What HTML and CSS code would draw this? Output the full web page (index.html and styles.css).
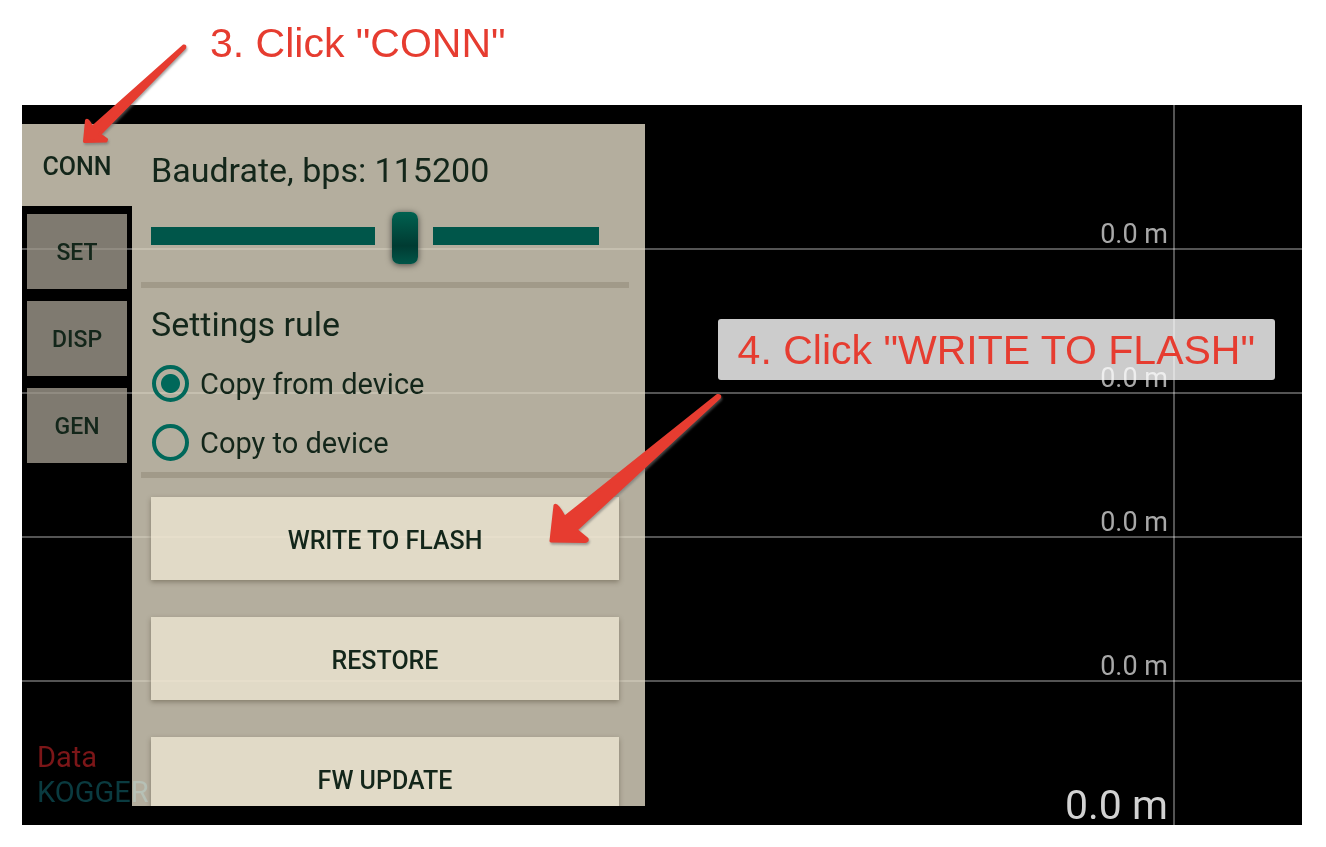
FILE: index.html
```html
<!DOCTYPE html>
<html lang="en">
<head>
<meta charset="utf-8">
<title>Connection settings guide</title>
<link rel="stylesheet" href="styles.css">
</head>
<body>
<main class="page">
  <header class="step step-header">3. Click "CONN"</header>

  <section class="screen">
    <div class="scale" aria-hidden="true">
      <div class="scale-row">0.0 m</div>
      <div class="scale-row">0.0 m</div>
      <div class="scale-row">0.0 m</div>
      <div class="scale-row">0.0 m</div>
      <div class="scale-row scale-total">0.0 m</div>
    </div>

    <nav class="tabs">
      <button class="tab tab-active" type="button">CONN</button>
      <button class="tab" type="button">SET</button>
      <button class="tab" type="button">DISP</button>
      <button class="tab" type="button">GEN</button>
    </nav>

    <form class="panel">
      <label class="title" for="baud">Baudrate, bps: 115200</label>
      <input class="slider" id="baud" type="range" min="0" max="7" value="4">
      <hr class="divider">
      <fieldset class="rules">
        <legend class="title">Settings rule</legend>
        <label class="option"><input class="radio" type="radio" name="rule" checked>Copy from device</label>
        <label class="option"><input class="radio" type="radio" name="rule">Copy to device</label>
      </fieldset>
      <hr class="divider">
      <div class="actions">
        <button class="action" type="button">WRITE TO FLASH</button>
        <button class="action" type="button">RESTORE</button>
        <button class="action" type="button">FW UPDATE</button>
      </div>
    </form>

    <div class="source">
      <div class="source-data">Data</div>
      <div class="source-name">KOGGER</div>
    </div>
  </section>

  <div class="step step-callout">4. Click "WRITE TO FLASH"</div>

  <svg class="arrows" width="760" height="580" viewBox="0 0 760 580" aria-hidden="true">
    <path d="M84.500 141.500 L86.500 120.500 Q88 119.500 92 127.500 L183.500 46 Q185.500 45.500 184.500 48 L99.500 134.500 L106.500 139.500 L106 141 Z"/>
    <path d="M551 541 L555 505.500 Q557 504 564.500 517.500 L717.500 395.500 Q720.500 395 719.500 397.500 L576 530 L587 539 Q588 541 585 541.500 Z"/>
  </svg>
</main>
</body>
</html>
```
FILE: styles.css
```css
* {
  box-sizing: border-box;
}

body {
  margin: 0;
  background: #fff;
  color: #13261a;
  font-family: Roboto, sans-serif;
}

button {
  font-family: inherit;
  color: inherit;
  border: 0;
  border-radius: 0;
}

.page {
  position: relative;
  display: flex;
  flex-direction: column;
  min-height: 100vh;
  padding: 0 24px 22px 22px;
}

.step {
  color: #e63c30;
  font-family: "Liberation Sans", sans-serif;
  font-size: 41px;
  line-height: 48px;
  white-space: nowrap;
}

.step-header {
  height: 105px;
  padding: 19px 0 0 188px;
}

.step-callout {
  position: absolute;
  top: 319px;
  right: 51px;
  padding: 7px 20px 6px;
  border-radius: 3px;
  background: rgba(255, 255, 255, 0.8);
}

.screen {
  position: relative;
  display: flex;
  align-items: flex-start;
  height: calc(100vh - 127px);
  min-height: 500px;
  padding: 19px 0;
  background: #000;
  overflow: hidden;
}

/* Depth scale behind the controls */
.scale {
  position: absolute;
  inset: 0;
  display: grid;
  grid-template-rows: repeat(5, 1fr);
}

.scale::after {
  content: "";
  position: absolute;
  top: 0;
  bottom: 0;
  right: 127px;
  width: 2px;
  background: rgba(255, 255, 255, 0.33);
}

.scale-row {
  position: relative;
  display: flex;
  align-items: flex-end;
  justify-content: flex-end;
  padding-right: 134px;
  color: #a8a8a8;
  font-size: 27px;
  line-height: 30px;
}

.scale-row:not(.scale-total)::after {
  content: "";
  position: absolute;
  left: 0;
  right: 0;
  bottom: -1px;
  height: 2px;
  background: rgba(255, 255, 255, 0.33);
}

.scale-total {
  color: #d2d2d2;
  font-size: 41px;
  line-height: 40px;
}

.tabs {
  position: relative;
  display: flex;
  flex-direction: column;
  gap: 12px;
  flex: 0 0 110px;
}

.tab {
  height: 75px;
  margin: 0 5px;
  padding: 2px 0 0;
  background: rgba(159, 153, 140, 0.8);
  font-size: 23px;
  font-weight: 500;
}

.tab-active {
  height: 82px;
  margin: 0 0 -4px;
  background: rgba(225, 218, 197, 0.8);
  font-size: 25px;
}

.panel {
  position: relative;
  display: flex;
  flex-direction: column;
  flex: 0 1 513px;
  height: 100%;
  padding: 26px 16px 0 9px;
  background: rgba(225, 218, 197, 0.8);
  overflow: hidden;
}

.title {
  padding: 0 10px;
  font-size: 34px;
  line-height: 40px;
}

.slider {
  appearance: none;
  flex: none;
  height: 52px;
  margin: 20px 30px 0 10px;
  background: transparent;
}

.slider::-webkit-slider-runnable-track {
  height: 18px;
  background: linear-gradient(90deg, #00564a 0 50%, transparent 50% 63%, #00564a 63%);
}

.slider::-webkit-slider-thumb {
  appearance: none;
  width: 26px;
  height: 52px;
  margin-top: -15px;
  border-radius: 7px;
  background: linear-gradient(#006150, #003b32 65%, #005548);
  box-shadow: 0 1px 6px rgba(0, 0, 0, 0.6);
}

.divider {
  flex: none;
  width: 100%;
  height: 6px;
  margin: 0;
  border: 0;
  background: #a19a89;
}

.slider + .divider {
  margin-top: 20px;
}

.rules {
  display: flex;
  flex-direction: column;
  margin: 0;
  padding: 9px 0 0;
  border: 0;
}

.rules .title {
  padding-top: 16px;
  padding-bottom: 1px;
}

.option {
  display: flex;
  align-items: center;
  gap: 11px;
  height: 59px;
  padding-left: 11px;
  font-size: 29px;
}

.radio {
  appearance: none;
  flex: none;
  width: 37px;
  height: 37px;
  margin: 0;
  border: 4px solid #00685a;
  border-radius: 50%;
}

.radio:checked {
  background: radial-gradient(circle, #00685a 9px, transparent 10px);
}

.actions {
  display: flex;
  flex-direction: column;
  gap: 37px;
  padding: 19px 10px 0;
}

.action {
  flex: none;
  height: 83px;
  padding: 3px 0 0;
  background: rgba(240, 232, 212, 0.75);
  box-shadow: 0 2px 5px rgba(60, 50, 30, 0.4);
  font-size: 25px;
  font-weight: 500;
}

.source {
  position: absolute;
  left: 15px;
  bottom: 15px;
  font-size: 29px;
  line-height: 35px;
  mix-blend-mode: screen;
}

.source-data {
  color: #7c1618;
}

.source-name {
  color: #0a3b40;
}

.arrows {
  position: absolute;
  top: 0;
  left: 0;
  fill: #e63c30;
  stroke: #e63c30;
  stroke-width: 3px;
  stroke-linejoin: round;
  filter: drop-shadow(1px 2px 1px rgba(110, 110, 110, 0.6));
  pointer-events: none;
}
```
